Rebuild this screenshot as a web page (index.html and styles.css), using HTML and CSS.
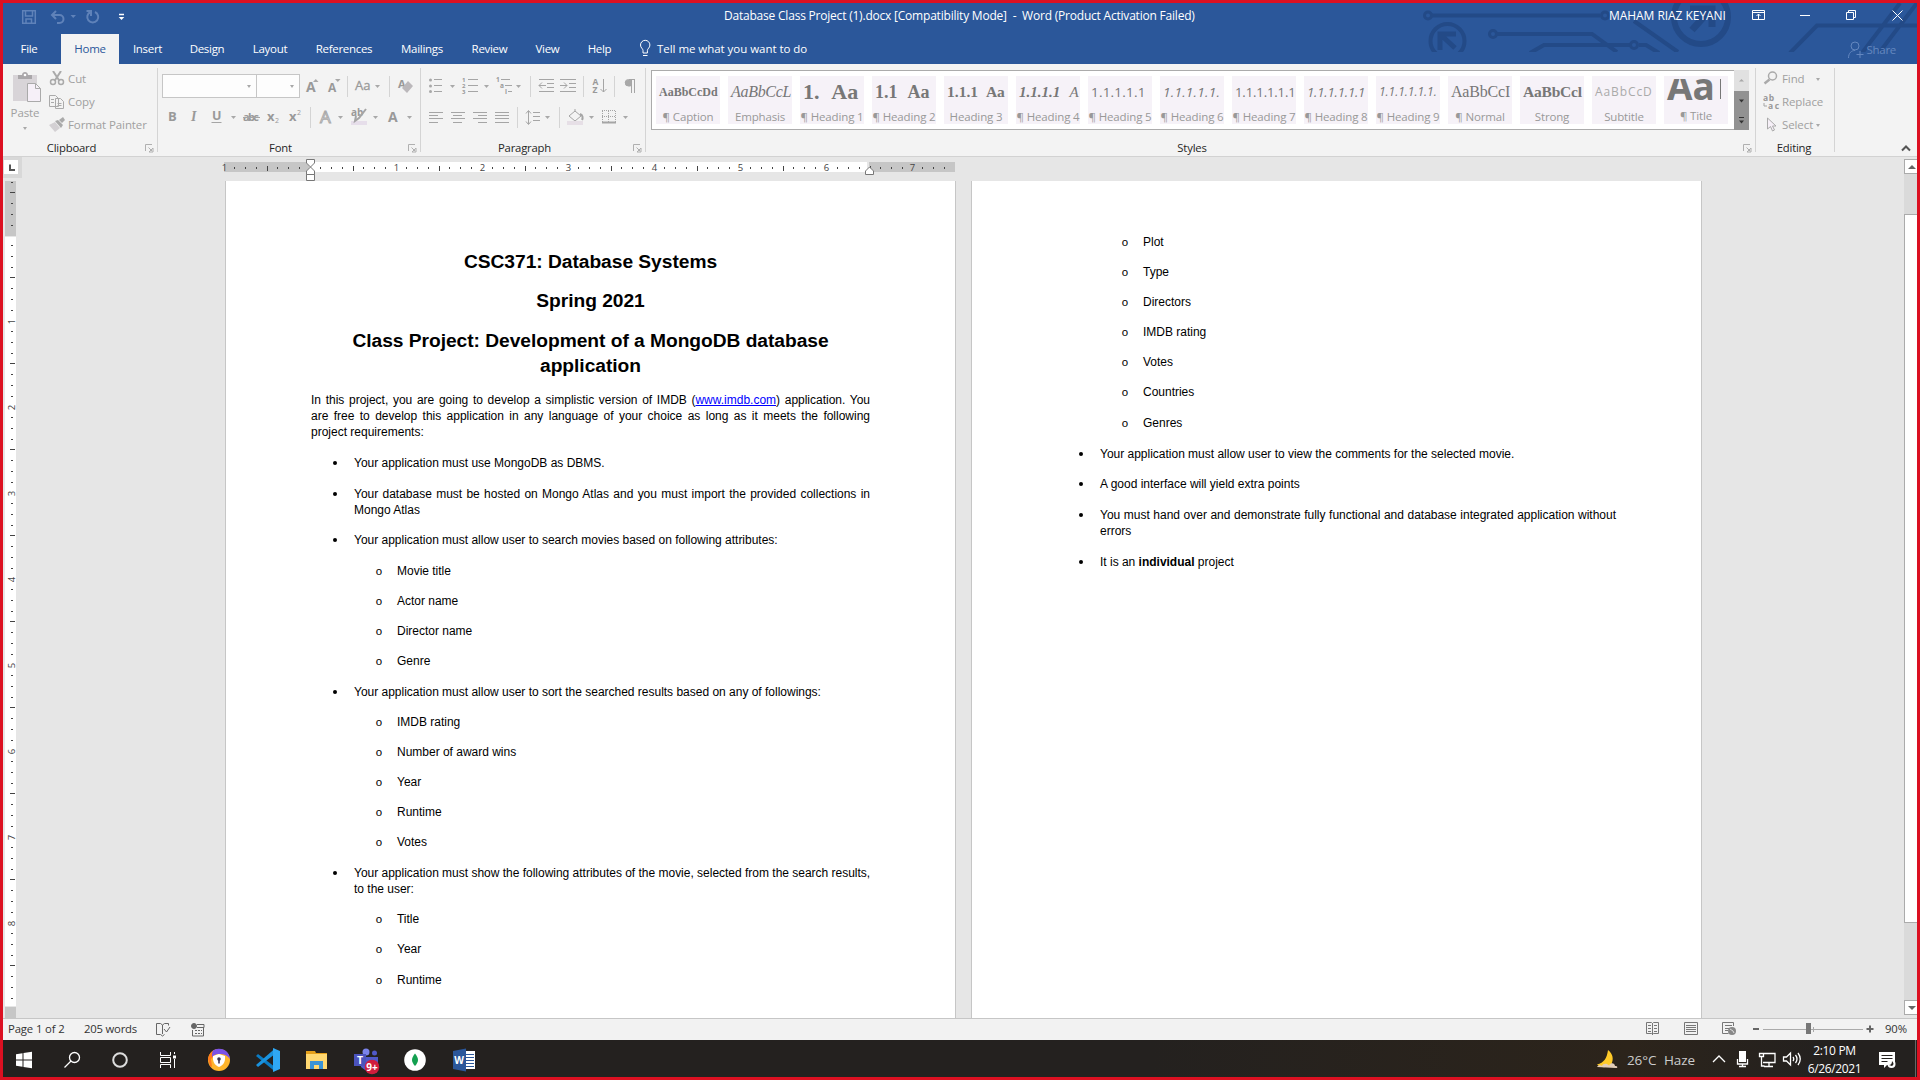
FILE: index.html
```html
<!DOCTYPE html>
<html lang="en">
<head>
<meta charset="utf-8">
<title>Database Class Project (1).docx - Word</title>
<link rel="stylesheet" href="styles.css">
</head>
<body>
<div class="screen">
  <header class="header">
    <svg class="circuit" width="494" height="49" viewBox="1423 3 494 49" fill="none" stroke="#234a87" stroke-width="4">
      <circle cx="1428" cy="15.500" r="3.500" stroke-width="3"/><path d="M1432 15.500h168M1634 21l44 31"/><circle cx="1605" cy="15.500" r="3.500" stroke-width="3"/>
      <circle cx="1447.500" cy="41" r="17"/><path d="M1440 50V34h16M1441 35l14 13" stroke-width="5"/>
      <circle cx="1493" cy="34" r="3.500" stroke-width="3"/><path d="M1497 34h95l25 18M1530 53l14-8h86M1639 45h7l13 8"/><circle cx="1634" cy="45" r="3.500" stroke-width="3"/>
      <circle cx="1701" cy="17" r="27" stroke-width="6"/><path d="M1690 9h22v18M1710 10l-18 20" stroke-width="7"/>
      <path d="M1790 53l27-27.500h100M1862 53l38-50M1879 53l38-50"/>
    </svg>
    <div class="titlebar">
      <svg class="qat" width="120" height="20" viewBox="14 7 120 20" fill="none" stroke="#5f82b9" stroke-width="1.500">
        <path d="M22.700 10.700h12.600v12.600H22.700zM25.500 11v5h7v-5M26 23v-4h5.500v4"/>
        <path d="M56 11l-4 4 4 4M53 15h6.500a4 4 0 0 1 0 8H57" stroke-width="2"/><path d="M70.500 15h5.500l-2.750 3z" fill="#5f82b9" stroke="none"/>
        <path d="M90.500 12a5.500 5.500 0 1 0 4.500 0M91 16v-5h-4.500" stroke-width="2"/>
        <path d="M119 14.500h5" stroke="#fff"/><path d="M118.700 17h5.600l-2.800 3z" fill="#fff" stroke="none"/>
      </svg>
      <div class="doc-title">Database Class Project (1).docx [Compatibility Mode]&nbsp; -&nbsp; Word (Product Activation Failed)</div>
      <div class="user">MAHAM RIAZ KEYANI</div>
      <svg class="winctl" width="160" height="20" viewBox="1750 5 160 20" fill="none" stroke="#fff">
        <path d="M1752.500 10.500h12v9h-12zM1752.500 12.500h12M1758.500 19v-5M1756.500 16l2-2 2 2M1800 15.500h10M1846.500 12.500h7v7h-7zM1848.500 12.500v-2h7v7h-2M1892.500 10.500l10 10M1902.500 10.500l-10 10"/>
      </svg>
    </div>
    <nav class="tabs">
      <span class="tab file">File</span><span class="tab active">Home</span><span class="tab t-ins">Insert</span><span class="tab t-des">Design</span><span class="tab t-lay">Layout</span><span class="tab t-ref">References</span><span class="tab t-mail">Mailings</span><span class="tab t-rev">Review</span><span class="tab t-view">View</span><span class="tab t-help">Help</span>
      <svg width="14" height="20" viewBox="638 38 14 20" fill="none" stroke="#fff"><path d="M643 52v-2.500c0-2-2.500-2.500-2.500-5.500a4.700 4.700 0 0 1 9.400 0c0 3-2.500 3.500-2.500 5.500V52zM643 54.500h4.500"/></svg>
      <span class="tell">Tell me what you want to do</span>
      <span class="share"><svg width="17" height="20" viewBox="1847 38 17 20" fill="none" stroke="#6487bf"><circle cx="1855" cy="45" r="4"/><path d="M1848.500 57c0-5 3-7.500 6.500-7.500M1860 50v7M1856.500 53.500h7"/></svg>Share</span>
    </nav>
  </header>

  <section class="ribbon">
    <div class="group clipboard">
      <div class="group-body">
        <div class="paste">
          <svg width="30" height="34" viewBox="12 70 30 34"><path d="M13 75h24v26H13z" fill="#d8d4d8"/><path d="M18 79v-4h4c0-4 6-4 6 0h4v4z" fill="#aaa7aa"/><circle cx="25" cy="75" r="1.300" fill="#fff"/><path d="M27.500 83.500h8l5 5v13h-13z" fill="#f6f0f8" stroke="#aaa"/><path d="M35.500 83.500v5h5" fill="none" stroke="#aaa"/></svg>
          <span class="paste-text">Paste</span>
          <i class="caret"></i>
        </div>
        <div class="clip-list">
          <div class="cmd"><svg width="18" height="16" viewBox="49 71 18 16" fill="none" stroke="#aaa" stroke-width="1.500"><path d="M53 71l6.500 10M61 71l-6.500 10" stroke-width="2"/><circle cx="53" cy="82" r="2.500"/><circle cx="61" cy="82" r="2.500"/></svg><span>Cut</span></div>
          <div class="cmd"><svg width="18" height="16" viewBox="49 93 18 16" fill="#f3f3f3" stroke="#aaa"><path d="M49.500 94.500h6l3 3v8h-9zM55.500 97.500h5l3 3v7h-8z"/><path d="M51 98.500h3M51 101.500h3M57.500 102.500h4M57.500 104.500h4"/></svg><span>Copy</span></div>
          <div class="cmd"><svg width="18" height="16" viewBox="49 116 18 16" fill="#aaa"><path d="M49 124l6-3 5 6-5 4z" fill="#d3d0d3"/><path d="M55 120l3-1 5 5-2 3z"/><path d="M59 119l4-3 2 3-3 3z"/></svg><span>Format Painter</span></div>
        </div>
      </div>
      <div class="group-foot"><span>Clipboard</span><svg class="launch" viewBox="0 0 9 9"><path d="M.5 7V.5H7M3.500 3.500L7 7M8 4v4H4z"/></svg></div>
    </div>

    <div class="group font">
      <div class="row">
        <div class="combo face"><i class="caret"></i></div><div class="combo size"><i class="caret"></i></div>
        <svg width="118" height="24" viewBox="300 74 118 24" class="ic">
          <text x="306" y="92" font-size="14" class="b">A</text><path d="M313 82h5.500l-2.700-3z" class="f"/><text x="328" y="92" font-size="12" class="b">A</text><path d="M335 79h5.500l-2.700 3z" class="f"/>
          <path d="M347.500 76v21M389.500 76v21" class="sep"/><text x="355" y="90" font-size="13" stroke="#999" stroke-width=".3">Aa</text><path d="M375 85h5l-2.500 3z" class="f"/>
          <text x="398" y="88" font-size="11" class="b">A</text><path d="M402 88l6-7 5 5-6 7z" fill="#bbb8bb"/>
        </svg>
      </div>
      <div class="row">
        <svg width="255" height="24" viewBox="162 105 255 24" class="ic">
          <text x="168" y="121" font-size="13" class="b">B</text><text x="191" y="121" font-size="14" class="se">I</text><text x="212" y="120" font-size="12.500" class="b">U</text><path d="M211.500 122.500h10" class="l"/><path d="M231 116h5l-2.500 3z" class="f"/>
          <text x="243" y="121" font-size="11" textLength="16" class="b">abc</text><path d="M243 117.500h17" class="l"/>
          <text x="267" y="121" font-size="13" class="b">x</text><text x="275" y="123" font-size="7">2</text><text x="289" y="121" font-size="13" class="b">x</text><text x="297" y="115" font-size="7">2</text>
          <path d="M310.500 107v21" class="sep"/><text x="320" y="123" font-size="17" fill="#f3f3f3" stroke="#aaa">A</text><path d="M338 116h5l-2.500 3z" class="f"/>
          <text x="351" y="116" font-size="10" class="b">ab</text><path d="M351 121h16v4h-16z" fill="#e6deea"/><path d="M366 109l-7 9-4 3 1-5" class="l" stroke-width="2"/><path d="M373 116h5l-2.500 3z" class="f"/>
          <text x="388" y="122" font-size="14" class="b">A</text><path d="M407 116h5l-2.500 3z" class="f"/>
        </svg>
      </div>
      <div class="group-foot"><span>Font</span><svg class="launch" viewBox="0 0 9 9"><path d="M.5 7V.5H7M3.500 3.500L7 7M8 4v4H4z"/></svg></div>
    </div>

    <div class="group para">
      <div class="row">
        <svg width="216" height="24" viewBox="425 74 216 24" class="ic">
          <g class="f"><circle cx="430.500" cy="80" r="1.500"/><circle cx="430.500" cy="86" r="1.500"/><circle cx="430.500" cy="91.500" r="1.500"/></g><path d="M434 79.500h8M434 85.500h8M434 91.500h8" class="l"/><path d="M450 85h5l-2.500 3z" class="f"/>
          <g font-size="6" class="b"><text x="462" y="82">1</text><text x="462" y="88">2</text><text x="462" y="94">3</text></g><path d="M468 79.500h10M468 85.500h10M468 91.500h10" class="l"/><path d="M484 85h5l-2.500 3z" class="f"/>
          <g font-size="6.500" class="b"><text x="496" y="82">1</text><text x="500" y="88">a</text><text x="505" y="94">i</text></g><path d="M501 79.500h9M505 85.500h7M508 91.500h4" class="l"/><path d="M516 85h5l-2.500 3z" class="f"/>
          <path d="M530.500 76v21M583.500 76v21M614.500 76v21" class="sep"/>
          <path d="M539 79.500h15M547 83.500h7M547 87.500h7M539 91.500h15M539 85.500h7M542 82.500l-3 3 3 3" class="l"/>
          <path d="M560 79.500h16M569 83.500h7M569 87.500h7M560 91.500h16M560 85.500h7M564 82.500l3 3-3 3" class="l"/>
          <text x="592.500" y="84.500" font-size="8.500" class="b">A</text><text x="592.500" y="93" font-size="8.500" class="b">Z</text><path d="M603.500 79v13M600.500 89l3 3 3-3" class="l"/>
          <path d="M631.500 80v13M634.500 80v13M635 79.500h-6.500a3 3 0 0 0 0 6.500h2" class="l"/><path d="M631 80h-3a3 3 0 0 0 0 6h3z" class="f"/>
        </svg>
      </div>
      <div class="row">
        <svg width="216" height="24" viewBox="425 105 216 24" class="ic">
          <path d="M429 112.500h14M429 115.500h9M429 118.500h14M429 122.500h9M451 112.500h14M453 115.500h9M451 118.500h14M453 122.500h9M473 112.500h14M478 115.500h9M473 118.500h14M478 122.500h9M495 112.500h14M495 115.500h14M495 118.500h14M495 122.500h14" class="l"/>
          <path d="M517.500 107v21M559.500 107v21" class="sep"/><path d="M528.500 111v13M526 113.500l2.500-3 2.500 3M526 121.500l2.500 3 2.500-3M533 112.500h7M533 116.500h7M533 120.500h7" class="l"/><path d="M545 116h5l-2.500 3z" class="f"/>
          <path d="M569 116l6-5 6 5-6 5zM575 112v-3" class="l"/><path d="M580 114c3 1 3 4 2 6" class="l" stroke-width="2"/><path d="M567 121h16v4h-16z" fill="#e6dfe6"/><path d="M589 116h5l-2.500 3z" class="f"/>
          <path d="M602.500 111v11M615.500 111v11M608.500 111v11M602 110.500h13M602 116.500h13" class="l" stroke-dasharray="1 1"/><path d="M602 122.500h14" class="l" stroke-width="2"/><path d="M623 116h5l-2.500 3z" class="f"/>
        </svg>
      </div>
      <div class="group-foot"><span>Paragraph</span><svg class="launch" viewBox="0 0 9 9"><path d="M.5 7V.5H7M3.500 3.500L7 7M8 4v4H4z"/></svg></div>
    </div>

    <div class="group styles">
      <div class="gallery">
        <div class="cards">
          <div class="card"><b class="pv cap">AaBbCcDd</b><span>¶ Caption</span></div>
          <div class="card"><i class="pv emp">AaBbCcL</i><span>Emphasis</span></div>
          <div class="card"><b class="pv h1">1.&nbsp; Aa</b><span>¶ Heading 1</span></div>
          <div class="card"><b class="pv h2">1.1&nbsp; Aa</b><span>¶ Heading 2</span></div>
          <div class="card"><b class="pv h3">1.1.1&nbsp; Aa</b><span>Heading 3</span></div>
          <div class="card"><i class="pv h4"><b>1.1.1.1</b>&nbsp; A</i><span>¶ Heading 4</span></div>
          <div class="card"><span class="pv h5">1.1.1.1.1</span><span>¶ Heading 5</span></div>
          <div class="card"><i class="pv h6">1.1.1.1.1.</i><span>¶ Heading 6</span></div>
          <div class="card"><span class="pv h7">1.1.1.1.1.1</span><span>¶ Heading 7</span></div>
          <div class="card"><i class="pv h8">1.1.1.1.1.1</i><span>¶ Heading 8</span></div>
          <div class="card"><i class="pv h9">1.1.1.1.1.1.</i><span>¶ Heading 9</span></div>
          <div class="card"><span class="pv nor">AaBbCcI</span><span>¶ Normal</span></div>
          <div class="card"><b class="pv str">AaBbCcl</b><span>Strong</span></div>
          <div class="card"><span class="pv subt">AaBbCcD</span><span>Subtitle</span></div>
          <div class="card"><b class="pv ttl">Aa<i class="edge"></i></b><span>¶ Title</span></div>
        </div>
        <svg width="15" height="60" viewBox="0 0 15 60"><path d="M0 0h15v21H0z" fill="#e1e1e1"/><path d="M0 21h15v39H0z" fill="#929292"/><path d="M5 11.500h5L7.500 9z" fill="#a8a8a8"/><path d="M5 29.500h5l-2.500 3zM5 50.500h5l-2.500 3zM5 47h5v1H5z" fill="#333"/></svg>
      </div>
      <div class="group-foot"><span>Styles</span><svg class="launch" viewBox="0 0 9 9"><path d="M.5 7V.5H7M3.500 3.500L7 7M8 4v4H4z"/></svg></div>
    </div>

    <div class="group editing">
      <div class="edit-list">
        <div class="cmd"><svg width="18" height="16" viewBox="1763 71 18 16" fill="none" stroke="#aaa"><circle cx="1772.500" cy="76" r="4" stroke-width="1.500"/><path d="M1769.500 79.500l-5 4" stroke-width="2.500"/></svg><span>Find</span><i class="caret c-find"></i></div>
        <div class="cmd"><svg width="18" height="16" viewBox="1763 93 18 16" class="ic"><text x="1763" y="100" font-size="8.500" textLength="11" class="b">ab</text><text x="1768" y="108" font-size="8.500" textLength="11" class="b">ac</text><path d="M1764 102v3h3" class="l"/></svg><span>Replace</span></div>
        <div class="cmd"><svg width="18" height="16" viewBox="1763 116 18 16" fill="#f6f0f8" stroke="#aaa"><path d="M1767.500 117v11l3-2.500 2 4.500 2-1-2-4h3.500z"/></svg><span>Select</span><i class="caret c-sel"></i></div>
      </div>
      <div class="group-foot"><span>Editing</span></div>
    </div>
    <svg class="collapse" width="10" height="7" viewBox="0 0 10 7"><path d="M1 5.500l4-4 4 4" fill="none" stroke="#555" stroke-width="2"/></svg>
  </section>

  <main class="work">
    <div class="vruler">
      <div class="corner"><svg width="14" height="14" viewBox="0 0 14 14"><path d="M6 4.500v5.500h5" fill="none" stroke="#555" stroke-width="2"/></svg></div>
      <svg width="12" height="837" viewBox="5 181 12 837" shape-rendering="crispEdges">
        <defs><g id="vi" fill="#444"><path d="M11 10h2v1h-2zM11 21h2v1h-2zM11 32h2v1h-2zM10 42h5v1h-5zM11 53h2v1h-2zM11 64h2v1h-2zM11 75h2v1h-2z"/></g></defs>
        <path d="M5 181h11v55H5zM5 1007h11v11H5z" fill="#c6c6c6"/><path d="M5 237h11v769H5z" fill="#fff"/>
        <use href="#vi" y="150"/><use href="#vi" y="235"/><use href="#vi" y="321"/><use href="#vi" y="407"/><use href="#vi" y="493"/><use href="#vi" y="579"/><use href="#vi" y="665"/><use href="#vi" y="751"/><use href="#vi" y="837"/><use href="#vi" y="923"/>
        <g class="rnum"><text transform="translate(15 321.500) rotate(-90)">1</text><text transform="translate(15 407.500) rotate(-90)">2</text><text transform="translate(15 493.500) rotate(-90)">3</text><text transform="translate(15 579.500) rotate(-90)">4</text><text transform="translate(15 665.500) rotate(-90)">5</text><text transform="translate(15 751.500) rotate(-90)">6</text><text transform="translate(15 837.500) rotate(-90)">7</text><text transform="translate(15 923.500) rotate(-90)">8</text></g>
      </svg>
    </div>
    <div class="canvas">
      <svg class="hruler" width="740" height="24" viewBox="218 157 740 24">
        <defs><g id="hi" fill="#444"><path d="M10 167h1v2h-1zM21 167h1v2h-1zM32 167h1v2h-1zM43 166h1v5h-1zM53 167h1v2h-1zM64 167h1v2h-1zM75 167h1v2h-1z"/></g></defs>
        <path d="M224 162h85v10h-85zM869 162h86v10h-86z" fill="#c6c6c6"/><path d="M310 162h557v10H310z" fill="#fff"/>
        <use href="#hi" x="224"/><use href="#hi" x="310"/><use href="#hi" x="396"/><use href="#hi" x="482"/><use href="#hi" x="568"/><use href="#hi" x="654"/><use href="#hi" x="740"/><use href="#hi" x="827"/>
        <path d="M922 167h1v2h-1zM933 167h1v2h-1zM944 167h1v2h-1z" fill="#444"/>
        <g class="rnum"><text x="224.500" y="171">1</text><text x="396.500" y="171">1</text><text x="482.500" y="171">2</text><text x="568.500" y="171">3</text><text x="654.500" y="171">4</text><text x="740.500" y="171">5</text><text x="826.500" y="171">6</text><text x="912.500" y="171">7</text></g>
        <g fill="#fff" stroke="#777"><path d="M306.500 159.500h8v3.500l-4 4-4-4zM306.500 174.500V171l4-4 4 4v3.500zM306.500 174.500h8v6h-8zM865.500 174.500V171l4-4 4 4v3.500z"/></g>
      </svg>
      <div class="pages">
        <article class="page">
          <h1>CSC371: Database Systems</h1>
          <h1>Spring 2021</h1>
          <h1 class="gap">Class Project: Development of a MongoDB database<br>application</h1>
          <p><span class="just">In this project, you are going to develop a simplistic version of IMDB (<a>www.imdb.com</a>) application. You</span><span class="just">are free to develop this application in any language of your choice as long as it meets the following</span>project requirements:</p>
          <ul>
            <li class="gap">Your application must use MongoDB as DBMS.</li>
            <li class="gap"><span class="just">Your database must be hosted on Mongo Atlas and you must import the provided collections in</span>Mongo Atlas</li>
            <li>Your application must allow user to search movies based on following attributes:</li>
            <li class="sub gap">Movie title</li><li class="sub">Actor name</li><li class="sub">Director name</li><li class="sub">Genre</li>
            <li class="gap">Your application must allow user to sort the searched results based on any of followings:</li>
            <li class="sub">IMDB rating</li><li class="sub">Number of award wins</li><li class="sub">Year</li><li class="sub">Runtime</li><li class="sub">Votes</li>
            <li class="gap"><span class="just">Your application must show the following attributes of the movie, selected from the search results,</span>to the user:</li>
            <li class="sub">Title</li><li class="sub">Year</li><li class="sub gap">Runtime</li>
          </ul>
        </article>
        <article class="page second">
          <ul>
            <li class="sub">Plot</li><li class="sub">Type</li><li class="sub">Directors</li><li class="sub">IMDB rating</li><li class="sub">Votes</li><li class="sub">Countries</li><li class="sub gap">Genres</li>
            <li class="gap">Your application must allow user to view the comments for the selected movie.</li>
            <li>A good interface will yield extra points</li>
            <li class="gap"><span class="just">You must hand over and demonstrate fully functional and database integrated application without</span>errors</li>
            <li class="gap">It is an <b>individual</b> project</li>
          </ul>
        </article>
      </div>
    </div>
    <div class="scroll">
      <div class="sbtn"><svg width="8" height="4" viewBox="0 0 8 4"><path d="M0 4h8L4 0z" fill="#666"/></svg></div>
      <div class="thumb"></div>
      <div class="sbtn"><svg width="8" height="4" viewBox="0 0 8 4"><path d="M0 0h8L4 4z" fill="#666"/></svg></div>
    </div>
  </main>

  <footer class="status">
    <span class="st-page">Page 1 of 2</span><span class="st-words">205 words</span>
    <svg width="50" height="18" viewBox="155 1020 50 18" fill="none" stroke="#666"><path d="M162.500 1024v9M156.500 1022.500h4l2 1.500 2-1.500h4v2M156.500 1022.500v11h4l2 1.500 2-1.500M164 1028l2.500 3 3.500-5"/><circle cx="194" cy="1025" r="2.500" fill="#666"/><path d="M197 1023.500h7v3h-7M192.500 1029v6h11v-8" /><path d="M195 1029.500h7M195 1032.500h7" stroke-dasharray="2 1"/></svg>
    <svg class="views" width="235" height="20" viewBox="1645 1020 235 20" fill="none" stroke="#777">
      <path d="M1646.500 1022.500h5l1 1 1-1h5v11h-5l-1 1-1-1h-5zM1652.500 1023v12M1648 1025.500h3M1648 1028.500h3M1648 1031.500h3M1654 1025.500h3M1654 1028.500h3M1654 1031.500h3"/>
      <path d="M1684.500 1022.500h13v12h-13zM1686 1025.500h10M1686 1027.500h10M1686 1029.500h10M1686 1031.500h10"/>
      <path d="M1733.500 1026v-3.500h-11v11h6M1725 1025.500h7M1725 1028.500h4M1725 1030.500h3"/><circle cx="1732" cy="1031" r="4" fill="#888" stroke="none"/><path d="M1730 1029l3 2 1 2" stroke="#ddd"/>
      <path d="M1753 1029h6M1866.500 1029h7M1870 1025.500v7" stroke-width="2" stroke="#666"/><path d="M1763 1029.500h100M1813.500 1027v5" stroke="#aaa"/><path d="M1806 1023h5v11h-5z" fill="#777" stroke="none"/>
    </svg>
    <span class="st-zoom">90%</span>
  </footer>

  <div class="taskbar">
    <svg width="477" height="37" viewBox="3 1040 477 37">
      <path d="M16 1054.200l6.500-1v6.300H16zM23.500 1053l8.500-1.200v7.700h-8.500zM16 1060.500h6.500v6.300l-6.500-1zM23.500 1060.500H32v7.700l-8.500-1.200z" fill="#fff"/>
      <g fill="none" stroke="#fff"><circle cx="74.500" cy="1057.500" r="5" stroke-width="1.300"/><path d="M71 1061l-6.500 6.500" stroke-width="1.300"/><circle cx="120" cy="1060" r="6.800" stroke-width="2" stroke="#ddd"/>
      <path d="M160.500 1052v3.500h10V1052M160.500 1068v-3.500h10v3.500M160.500 1057.500h10v5h-10zM174.500 1052v2M174.500 1059v9"/><path d="M173 1055.500h3v3h-3z" fill="#fff" stroke="none"/></g>
      <circle cx="219" cy="1060" r="11" fill="#ffb52b"/><path d="M208 1059a11 11 0 0 1 11-10l-3 5-5 5 1 8-2-1z" fill="#ff7b1c"/><path d="M213 1050.500a11 11 0 0 1 17 8.500c-3-4-6-5-11-5-3 0-5 1-7 3 0-3 0-4 1-6.500z" fill="#7a52e8"/><path d="M219 1054l6 2c.5 6-1.500 9-6 11-4.500-2-6.500-5-6-11z" fill="#fff"/><circle cx="219" cy="1059" r="1.800" fill="#3a3152"/><path d="M218.200 1060h1.600v3.500h-1.600z" fill="#3a3152"/>
      <path d="M256 1056l2-2 17 13v4.500z" fill="#0b7cc4"/><path d="M256 1065l2 2 17-13v-5.500z" fill="#1a93df"/><path d="M273 1048l7 3v18l-7 3z" fill="#2fa8f4"/>
      <path d="M306 1051h9l1 2h11v16h-21z" fill="#e5a01b"/><path d="M306 1054h21v15h-21z" fill="#ffd871"/><path d="M310 1069v-8h13v8h-4v-4h-5v4z" fill="#3a93d6"/>
      <circle cx="366" cy="1052" r="3.500" fill="#7b83eb"/><circle cx="374.500" cy="1053" r="2.500" fill="#5059c9"/><path d="M361 1057h17v8a6 6 0 0 1-8 5h-5l-4-3z" fill="#5059c9"/><path d="M354 1054h12v12h-12z" fill="#4b53bc"/><text x="360" y="1064" class="tt" font-size="10.500">T</text><circle cx="372" cy="1067" r="7.300" fill="#d11d3c"/><text x="372" y="1071" class="tt" font-size="10">9+</text>
      <circle cx="415" cy="1060" r="10.800" fill="#fff"/><path d="M415 1053.500c4 5 4 8 0 12.500-4-4.500-4-7.500 0-12.500z" fill="#13a050"/>
      <path d="M464 1051h11v18h-11z" fill="#fff"/><path d="M466 1054.500h8M466 1057.500h8M466 1060.500h8M466 1063.500h8M466 1066.500h8" stroke="#2b579a"/><path d="M453 1051l13-2.500v23L453 1069z" fill="#2b579a"/><text x="459" y="1064" class="tt" font-size="10">W</text>
    </svg>
    <div class="weather"><svg width="22" height="20" viewBox="0 0 22 20"><path d="M12 0c5 4 6 9 3 15-5 3-10 3-14-.500C8 13 11 8 12 0z" fill="#ffca28"/><path d="M1 17c1-2 4-2 5-1 1-3 5-3 7-.500 2-4 6-2 6 .500 3 0 3 2 1 2z" fill="#e3cdb8"/></svg><span class="temp">26°C</span><span class="haze">Haze</span></div>
    <svg width="90" height="24" viewBox="1712 1048 90 24" fill="none" stroke="#fff" stroke-width="1.300"><path d="M1713 1063l6-6 6 6"/><path d="M1739 1052h7v11h-7z" fill="#fff" stroke="none"/><path d="M1737.500 1060v5h10v-5M1742.500 1065v3M1739 1067.500h7"/><path d="M1763 1054.500h12v9h-12M1769 1064v3M1764 1067.500h9M1759.500 1054.500h4v3h-4zM1761.500 1058v9h3"/><path d="M1783.500 1058v4h3l4 4v-12l-4 4zM1793 1058q1.500 2 0 4M1795.500 1056q3 4 0 8M1798 1054q4.500 6 0 12"/></svg>
    <div class="clock"><span>2:10 PM</span><span>6/26/2021</span></div>
    <svg class="notif" width="38" height="37" viewBox="1878 1040 38 37"><path d="M1879 1052h16v13h-8l-3 3v-3h-5z" fill="#fff"/><path d="M1881.500 1055.500h11M1881.500 1058.500h11M1881.500 1061.500h6" stroke="#24211f"/><circle cx="1891.500" cy="1064" r="4" fill="#fff"/><path d="M1889 1065q3 0 3-4 3 3 0 5z" fill="#24211f"/><path d="M1915.500 1040v37" stroke="#666"/></svg>
  </div>
</div>
</body>
</html>
```
FILE: styles.css
```css
* { box-sizing: border-box; }
body { margin: 0; font-family: "Open Sans", "Noto Sans", sans-serif; font-size: 11.5px; color: #262626; }
svg { display: block; flex: none; }
.screen { width: 1920px; height: 1080px; border: 3px solid #dc1021; display: flex; flex-direction: column; overflow: hidden; background: #e6e6e6; }

.header { height: 61px; flex: none; background: #2b579a; position: relative; color: #fff; }
.circuit { position: absolute; right: 0; top: 0; }
.titlebar { height: 31px; display: flex; align-items: flex-start; position: relative; font-size: 12px; }
.qat { margin: 4px 0 0 11px; }
.doc-title { margin-left: 590px; width: 475px; line-height: 25px; white-space: pre; letter-spacing: -.21px; }
.user { margin-left: 410px; width: 120px; line-height: 25px; white-space: nowrap; letter-spacing: -.05px; }
.winctl { margin: 2px 0 0 21px; }
.tabs { height: 30px; display: flex; align-items: center; position: relative; letter-spacing: -.3px; }
.tab { height: 30px; line-height: 30px; text-align: center; white-space: nowrap; }
.file { width: 52px; margin-right: 6px; }
.active { width: 58px; background: #f3f3f3; color: #2b579a; }
.t-ins { width: 57px; } .t-des { width: 62px; } .t-lay { width: 64px; } .t-ref { width: 84px; }
.t-mail { width: 72px; } .t-rev { width: 63px; } .t-view { width: 53px; } .t-help { width: 51px; }
.tabs > svg { margin-left: 13px; }
.tell { margin-left: 5px; letter-spacing: -.04px; line-height: 16px; padding-bottom: 1px; }
.share { margin-left: auto; margin-right: 21px; display: flex; align-items: center; gap: 3px; color: #6487bf; }

.ribbon { height: 93px; flex: none; background: #f3f3f3; border-bottom: 1px solid #d2d2d2; display: flex; align-items: flex-start; }
.group { height: 84px; margin-top: 4px; border-right: 1px solid #d4d4d4; display: flex; flex-direction: column; flex: none; }
.clipboard { width: 155px; } .font { width: 263px; } .para { width: 225px; } .styles { width: 1110px; } .editing { width: 79px; }
.group-foot { margin-top: auto; height: 10px; display: flex; align-items: center; letter-spacing: -.2px; font-size: 11.3px; line-height: 10px; }
.group-foot span { flex: 1; text-align: center; padding-top: 2px; }
.launch { width: 9px; height: 9px; margin: 2px 3px 0 5px; fill: none; stroke: #b0b0b0; }
.group-body { display: flex; height: 66px; color: #a0a0a0; }
.paste { width: 44px; display: flex; flex-direction: column; align-items: center; padding-top: 2px; letter-spacing: -.1px; }
.paste svg { margin-left: 4px; }
.paste-text { line-height: 17px; }
.caret { width: 0; height: 0; border: 2.5px solid transparent; border-top: 3px solid #a8a8a8; border-bottom: 0; }
.paste .caret { margin-top: 6px; }
.clip-list { padding: 0 0 0 2px; }
.cmd { height: 23px; display: flex; align-items: center; color: #a0a0a0; letter-spacing: -.1px; }
.cmd span { margin-left: 1px; line-height: 20px; padding-bottom: 1px; }
.cmd svg { margin-bottom: 1px; }
.row { height: 24px; margin: 6px 0 0 4px; display: flex; }
.row + .row { margin-top: 7px; }
.combo { height: 24px; border: 1px solid #c6c6c6; background: #fdfdfd; display: flex; align-items: center; justify-content: flex-end; padding-right: 5px; }
.face { width: 95px; } .size { width: 43px; border-left: 0; }
.ic { font-family: "Open Sans", sans-serif; fill: #999; }
.ic .b { font-weight: 700; }
.ic .se { font-family: "Liberation Serif", serif; font-style: italic; font-weight: 700; }
.ic .f { fill: #a8a8a8; }
.ic .l { fill: none; stroke: #a5a5a5; }
.ic .sep { stroke: #d4d4d4; }
.gallery { margin: 2px 0 0 5px; width: 1098px; height: 60px; border: 1px solid #ababab; border-right: 0; background: #fff; display: flex; align-items: flex-start; }
.gallery > svg { margin-top: -1px; }
.cards { width: 1082px; display: flex; gap: 8px; padding: 5px 0 0 4px; }
.card { width: 64px; height: 48px; background: #f6f2f8; display: flex; flex-direction: column; align-items: center; color: #999; white-space: nowrap; letter-spacing: -.15px; }
.card > :last-child { line-height: 16px; }
.pv { height: 25px; margin-top: 3px; margin-bottom: 5px; width: 60px; padding-left: 1px; line-height: 26px; color: #777; letter-spacing: 0; font-family: "Liberation Serif", serif; }
.cap { font-size: 12px; letter-spacing: 0; } .emp { font-size: 16px; letter-spacing: -.3px; }
.h1 { font-size: 22px; word-spacing: 1px; } .h2 { font-size: 18px; word-spacing: 1px; } .h3 { font-size: 15.5px; word-spacing: .5px; }
.h4 { font-size: 15px; word-spacing: 1px; }
.h5, .h6, .h7, .h8, .h9 { font-family: "Open Sans", sans-serif; font-size: 13.5px; }
.h5 { letter-spacing: .2px; } .h6 { letter-spacing: .3px; } .h7, .h8 { font-size: 13px; letter-spacing: -.1px; } .h9 { font-size: 12px; }
.nor { font-size: 16px; letter-spacing: -.2px; } .str { font-size: 15.500px; letter-spacing: -.2px; }
.subt { font-family: "Open Sans", sans-serif; font-size: 12px; letter-spacing: .9px; color: #aaa; }
.ttl { height: 22px; margin-top: 3px; margin-bottom: 8px; font-family: "Open Sans", sans-serif; font-size: 37px; font-weight: 700; line-height: 13px; letter-spacing: 0; overflow: hidden; display: flex; }
.edge { width: 1px; height: 20px; margin-left: 5px; background: #777; }
.edit-list { padding-left: 7px; }
.edit-list .caret { margin-left: 11px; }
.edit-list .c-sel { margin-left: 3px; }
.editing .group-foot { padding-right: 2px; }
.collapse { margin: 81px 0 0 66px; }

.work { height: 861px; flex: none; display: flex; background: #e6e6e6; }
.vruler { width: 19px; display: flex; flex-direction: column; }
.corner { width: 19px; height: 21px; margin-bottom: 3px; background: #d8d8d8; padding: 3px 0 0 1px; }
.corner svg { background: #fff; }
.vruler > svg { margin-left: 2px; }
.rnum { font-family: "Open Sans", sans-serif; font-size: 9.500px; fill: #444; text-anchor: middle; }
.canvas { width: 1882px; display: flex; flex-direction: column; }
.hruler { margin-left: 196px; }
.pages { display: flex; gap: 15px; margin-left: 203px; }
.page { width: 731px; height: 837px; background: #fff; border: solid #c6c6c6; border-width: 0 1px; padding: 54px 85px 0 85px; font: 12px/16px "Liberation Sans", Arial, sans-serif; color: #000; }
.second { padding-top: 39px; }
.page h1 { margin: 14px 0 0; font-size: 19.2px; line-height: 25px; text-align: center; font-weight: 700; white-space: nowrap; letter-spacing: -.03px; }
.page p { margin: 14px 0 0; }
.page ul { margin: 0; padding: 0; list-style: none; }
.page li { margin: 14px 0 0; padding-left: 43px; display: block; letter-spacing: -.01px; }
.page li.sub { padding-left: 86px; }
.page .gap { margin-top: 15px; }
.page li::before { content: ""; float: left; width: 4px; height: 4px; border-radius: 2px; background: #000; margin: 6px 0 0 -21px; }
.page li.sub::before { content: "o"; width: auto; height: 14px; margin: 2px 0 0 -21.5px; background: none; font: 11.5px/14px "Liberation Mono", monospace; }
.just { display: block; text-align: justify; text-align-last: justify; white-space: nowrap; letter-spacing: -.01px; }
.page a { color: #00f; text-decoration: underline; }
.scroll { width: 13px; padding: 2px 0 3px; background: linear-gradient(#dadada, #dadada) 0 16px / 100% 828px no-repeat; display: flex; flex-direction: column; }
.sbtn { height: 15px; flex: none; border: 1px solid #ababab; border-right: 0; background: #fff; display: flex; align-items: center; justify-content: center; padding-left: 1px; }
.thumb { height: 710px; margin: 40px 0 77px; border: 1px solid #ababab; border-right: 0; background: #fff; }

.status { height: 22px; flex: none; background: #f2f2f2; border-top: 1px solid #c6c6c6; display: flex; align-items: center; font-size: 11.3px; letter-spacing: -.12px; color: #333; }
.status span { padding-bottom: 3px; }
.st-page { margin-left: 5px; width: 76px; }
.st-words { width: 71px; letter-spacing: -.2px; }
.views { margin-left: auto; }
.st-zoom { width: 34px; margin-left: 3px; padding-left: 2px; }

.taskbar { height: 37px; flex: none; display: flex; align-items: center; background: linear-gradient(90deg, #24211f 0, #24211f 60%, #2c241b 85%, #24211f 95%); color: #fff; }
.tt { font-family: "Open Sans", sans-serif; font-weight: 700; fill: #fff; text-anchor: middle; }
.weather { margin-left: 1116px; width: 116px; display: flex; align-items: center; font-size: 13.5px; color: #ccc; letter-spacing: -.1px; padding-top: 2px; }
.temp { margin-left: 9px; width: 37px; }
.clock { width: 76px; display: flex; flex-direction: column; align-items: center; line-height: 18px; font-size: 12px; letter-spacing: -.35px; padding: 3px 11px 0 0; }
```
